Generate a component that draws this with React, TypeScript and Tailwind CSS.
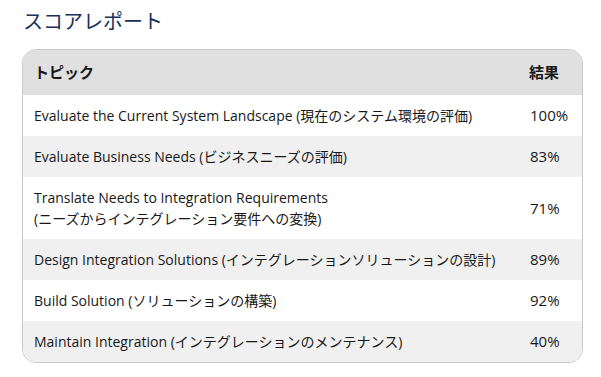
const rows: { topic: string[]; score: string }[] = [
  { topic: ['Evaluate the Current System Landscape (現在のシステム環境の評価)'], score: '100%' },
  { topic: ['Evaluate Business Needs (ビジネスニーズの評価)'], score: '83%' },
  {
    topic: ['Translate Needs to Integration Requirements', '(ニーズからインテグレーション要件への変換)'],
    score: '71%',
  },
  { topic: ['Design Integration Solutions (インテグレーションソリューションの設計)'], score: '89%' },
  { topic: ['Build Solution (ソリューションの構築)'], score: '92%' },
  { topic: ['Maintain Integration (インテグレーションのメンテナンス)'], score: '40%' },
];

export default function App() {
  return (
    <div
      className="w-[601px] h-[377px] bg-white px-[22px] pt-[8px]"
      style={{ fontFamily: "'Open Sans', 'Noto Sans CJK JP', sans-serif" }}
    >
      <h2 className="text-[20px] leading-[28px] text-[#16325c] pl-px">スコアレポート</h2>
      <div className="mt-[13px] w-[561px] rounded-[14px] border border-[#c9c9c9] overflow-hidden">
        <div className="flex items-center h-[45px] bg-[#e0e0e0] text-[15px] font-bold text-[#181818]">
          <div className="flex-1 pl-[11px]">トピック</div>
          <div className="w-[53px]">結果</div>
        </div>
        {rows.map((r, i) => (
          <div
            key={i}
            className={`flex items-center py-[10px] text-[14px] leading-[21px] text-[#181818] ${
              i % 2 === 1 ? 'bg-[#f0f0f0]' : 'bg-white'
            }`}
          >
            <div className="flex-1 pl-[11px]">
              {r.topic.map((t, j) => (
                <div key={j}>{t}</div>
              ))}
            </div>
            <div className="w-[53px] pl-[1px] text-[15px]">{r.score}</div>
          </div>
        ))}
      </div>
    </div>
  );
}
